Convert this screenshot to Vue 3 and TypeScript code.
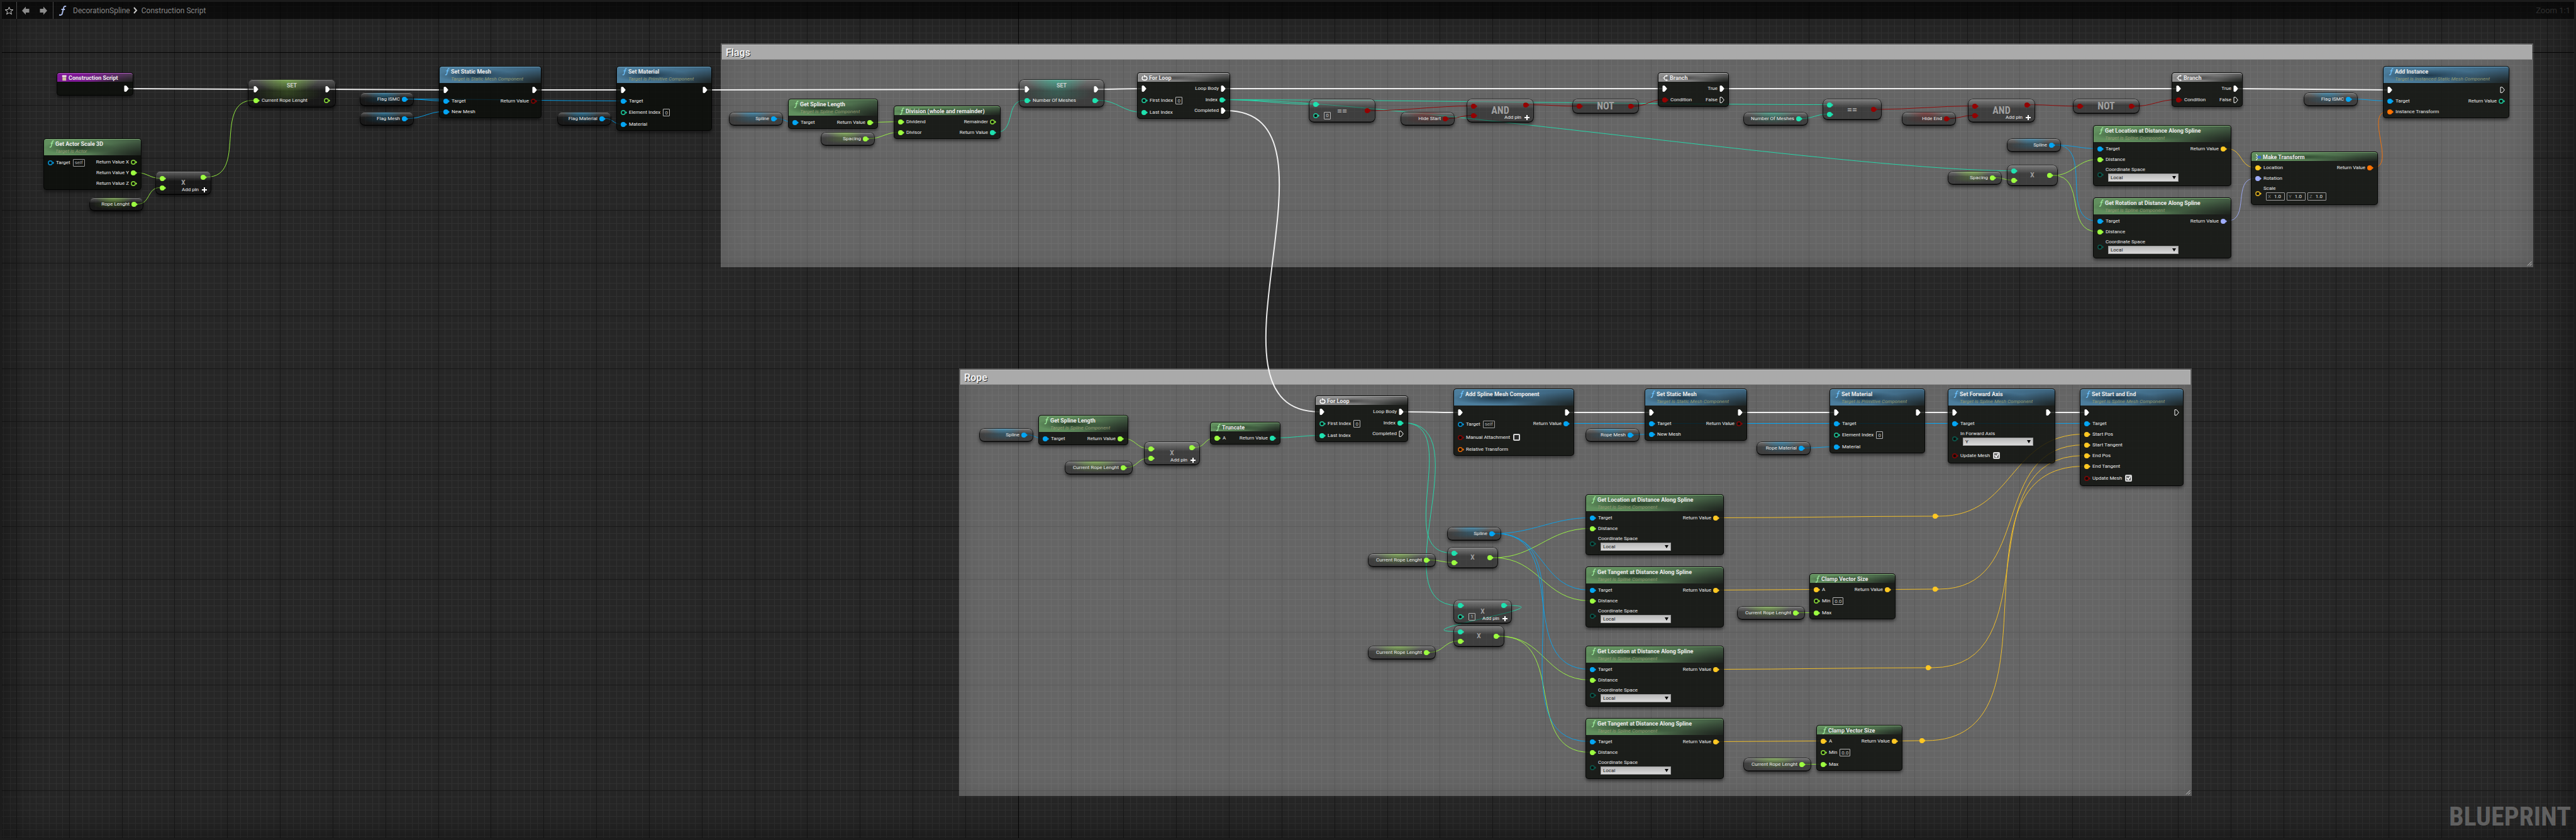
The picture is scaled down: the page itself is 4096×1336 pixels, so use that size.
<script setup lang="ts">
import { computed, nextTick, onBeforeUnmount, onMounted, ref } from 'vue'

type PinType = 'exec' | 'real' | 'obj' | 'int' | 'bool' | 'vec' | 'rot' | 'xform' | 'enum'
type Control = 'self' | 'num' | 'check' | 'select' | 'vec'

interface Pin {
  k: string
  t: PinType
  l?: string
  c?: Control
  v?: string
}

interface GraphNode {
  id: string
  kind: 'fn' | 'set' | 'var' | 'op' | 'knot'
  col: number
  row: number
  w: number
  tone?: 'green' | 'blue' | 'gray' | 'purple'
  icon?: 'f' | 'loop' | 'branch' | 'event' | 'make'
  title?: string
  sub?: string
  addPin?: boolean
  ins: Pin[]
  outs: Pin[]
}

const CELL = 10.4784
const colors: Record<PinType, string> = {
  exec: '#ffffff',
  real: '#9dfd41',
  obj: '#04a6f4',
  int: '#1fe2b0',
  bool: '#930202',
  vec: '#ffc823',
  rot: '#9fadfb',
  xform: '#ff7302',
  enum: '#0a6458',
}

const p = (k: string, t: PinType, l?: string, c?: Control, v?: string): Pin => ({ k, t, l, c, v })
const exec = (l?: string, k = 'exec'): Pin => p(k, 'exec', l)

const variable = (id: string, col: number, row: number, w: number, t: PinType, title: string): GraphNode => ({
  id, kind: 'var', col, row, w, ins: [], outs: [p('v', t, title)],
})

const setter = (id: string, col: number, row: number, w: number, t: PinType, label: string): GraphNode => ({
  id, kind: 'set', col, row, w, title: 'SET', ins: [exec(), p('v', t, label)], outs: [exec(), p('v', t)],
})

const op = (
  id: string, col: number, row: number, w: number, title: string, ins: Pin[], out: PinType, addPin = false,
): GraphNode => ({ id, kind: 'op', col, row, w, title, ins, outs: [p('v', out)], addPin })

const knot = (id: string, col: number, row: number): GraphNode => ({
  id, kind: 'knot', col, row, w: 24, ins: [], outs: [p('v', 'vec')],
})

const splineLength = (id: string, col: number, row: number): GraphNode => ({
  id, kind: 'fn', col, row, w: 143, tone: 'green', icon: 'f', title: 'Get Spline Length', sub: 'Target is Spline Component',
  ins: [p('target', 'obj', 'Target')], outs: [p('ret', 'real', 'Return Value')],
})

const alongSpline = (id: string, col: number, row: number, what: string, out: PinType): GraphNode => ({
  id, kind: 'fn', col, row, w: 220, tone: 'green', icon: 'f',
  title: `Get ${what} at Distance Along Spline`, sub: 'Target is Spline Component',
  ins: [p('target', 'obj', 'Target'), p('dist', 'real', 'Distance'), p('space', 'enum', 'Coordinate Space', 'select', 'Local')],
  outs: [p('ret', out, 'Return Value')],
})

const forLoop = (id: string, col: number, row: number): GraphNode => ({
  id, kind: 'fn', col, row, w: 148, tone: 'gray', icon: 'loop', title: 'For Loop',
  ins: [exec(), p('first', 'int', 'First Index', 'num', '0'), p('last', 'int', 'Last Index')],
  outs: [exec('Loop Body', 'body'), p('index', 'int', 'Index'), exec('Completed', 'done')],
})

const branch = (id: string, col: number, row: number): GraphNode => ({
  id, kind: 'fn', col, row, w: 113, tone: 'gray', icon: 'branch', title: 'Branch',
  ins: [exec(), p('cond', 'bool', 'Condition')], outs: [exec('True', 'true'), exec('False', 'false')],
})

const setStaticMesh = (id: string, col: number, row: number): GraphNode => ({
  id, kind: 'fn', col, row, w: 163, tone: 'blue', icon: 'f', title: 'Set Static Mesh', sub: 'Target is Static Mesh Component',
  ins: [exec(), p('target', 'obj', 'Target'), p('mesh', 'obj', 'New Mesh')],
  outs: [exec(), p('ret', 'bool', 'Return Value')],
})

const setMaterial = (id: string, col: number, row: number): GraphNode => ({
  id, kind: 'fn', col, row, w: 152, tone: 'blue', icon: 'f', title: 'Set Material', sub: 'Target is Primitive Component',
  ins: [exec(), p('target', 'obj', 'Target'), p('elem', 'int', 'Element Index', 'num', '0'), p('mat', 'obj', 'Material')],
  outs: [exec()],
})

const clampSize = (id: string, col: number, row: number): GraphNode => ({
  id, kind: 'fn', col, row, w: 137, tone: 'green', icon: 'f', title: 'Clamp Vector Size',
  ins: [p('a', 'vec', 'A'), p('min', 'real', 'Min', 'num', '0.0'), p('max', 'real', 'Max')],
  outs: [p('ret', 'vec', 'Return Value')],
})

const nodes: GraphNode[] = [
  { id: 'construct', kind: 'fn', col: 8, row: 11, w: 122, tone: 'purple', icon: 'event', title: 'Construction Script', ins: [], outs: [exec()] },
  setter('setRope', 37, 12, 140, 'real', 'Current Rope Lenght'),
  {
    id: 'scale', kind: 'fn', col: 6, row: 21, w: 156, tone: 'green', icon: 'f', title: 'Get Actor Scale 3D', sub: 'Target is Actor',
    ins: [p('target', 'obj', 'Target', 'self')],
    outs: [p('x', 'real', 'Return Value X'), p('y', 'real', 'Return Value Y'), p('z', 'real', 'Return Value Z')],
  },
  op('mulScale', 23, 26, 89, 'X', [p('a', 'real'), p('b', 'real')], 'real', true),
  variable('ropeLen', 13, 30, 86, 'real', 'Rope Lenght'),
  variable('flagIsmc', 54, 14, 86, 'obj', 'Flag ISMC'),
  variable('flagMesh', 54, 17, 86, 'obj', 'Flag Mesh'),
  setStaticMesh('ssm', 66, 10),
  variable('flagMat', 84, 17, 86, 'obj', 'Flag Material'),
  setMaterial('sm', 93, 10),
  variable('spline', 110, 17, 86, 'obj', 'Spline'),
  splineLength('gsl', 119, 15),
  variable('spacing', 124, 20, 86, 'real', 'Spacing'),
  {
    id: 'div', kind: 'fn', col: 135, row: 16, w: 170, tone: 'green', icon: 'f', title: 'Division (whole and remainder)',
    ins: [p('a', 'real', 'Dividend'), p('b', 'real', 'Divisor')],
    outs: [p('rem', 'real', 'Remainder'), p('ret', 'int', 'Return Value')],
  },
  setter('setCount', 154, 12, 136, 'int', 'Number Of Meshes'),
  forLoop('loop', 172, 11),
  op('eqStart', 198, 15, 106, '==', [p('a', 'int'), p('b', 'int', undefined, 'num', '0')], 'bool'),
  variable('hideStart', 212, 17, 86, 'bool', 'Hide Start'),
  op('andStart', 222, 15, 107, 'AND', [p('a', 'bool'), p('b', 'bool')], 'bool', true),
  op('notStart', 238, 15, 106, 'NOT', [p('a', 'bool')], 'bool'),
  branch('branchStart', 251, 11),
  variable('count', 264, 17, 103, 'int', 'Number Of Meshes'),
  op('eqEnd', 276, 15, 94, '==', [p('a', 'int'), p('b', 'int')], 'bool'),
  variable('hideEnd', 288, 17, 86, 'bool', 'Hide End'),
  op('andEnd', 298, 15, 107, 'AND', [p('a', 'bool'), p('b', 'bool')], 'bool', true),
  op('notEnd', 314, 15, 106, 'NOT', [p('a', 'bool')], 'bool'),
  branch('branchEnd', 329, 11),
  variable('splineFlag', 304, 21, 86, 'obj', 'Spline'),
  variable('spacingFlag', 295, 26, 86, 'real', 'Spacing'),
  op('mulFlag', 304, 25, 81, 'X', [p('a', 'int'), p('b', 'real')], 'real'),
  alongSpline('locFlag', 317, 19, 'Location', 'vec'),
  alongSpline('rotFlag', 317, 30, 'Rotation', 'rot'),
  {
    id: 'make', kind: 'fn', col: 341, row: 23, w: 202, tone: 'green', icon: 'make', title: 'Make Transform',
    ins: [p('loc', 'vec', 'Location'), p('rot', 'rot', 'Rotation'), p('scale', 'vec', 'Scale', 'vec', '1.0')],
    outs: [p('ret', 'xform', 'Return Value')],
  },
  variable('flagIsmcAdd', 349, 14, 86, 'obj', 'Flag ISMC'),
  {
    id: 'addInst', kind: 'fn', col: 361, row: 10, w: 201, tone: 'blue', icon: 'f', title: 'Add Instance',
    sub: 'Target is Instanced Static Mesh Component',
    ins: [exec(), p('target', 'obj', 'Target'), p('xform', 'xform', 'Instance Transform')],
    outs: [exec(), p('ret', 'int', 'Return Value')],
  },

  variable('splineRope', 148, 65, 86, 'obj', 'Spline'),
  splineLength('gslRope', 157, 63),
  variable('curA', 161, 70, 108, 'real', 'Current Rope Lenght'),
  op('mulRope', 173, 67, 89, 'X', [p('a', 'real'), p('b', 'real')], 'real', true),
  {
    id: 'trunc', kind: 'fn', col: 183, row: 64, w: 112, tone: 'green', icon: 'f', title: 'Truncate',
    ins: [p('a', 'real', 'A')], outs: [p('ret', 'int', 'Return Value')],
  },
  forLoop('loopRope', 199, 60),
  {
    id: 'addMesh', kind: 'fn', col: 220, row: 59, w: 192, tone: 'blue', icon: 'f', title: 'Add Spline Mesh Component', sub: ' ',
    ins: [
      exec(), p('target', 'obj', 'Target', 'self'), p('manual', 'bool', 'Manual Attachment', 'check'),
      p('rel', 'xform', 'Relative Transform'),
    ],
    outs: [exec(), p('ret', 'obj', 'Return Value')],
  },
  variable('ropeMesh', 240, 65, 86, 'obj', 'Rope Mesh'),
  setStaticMesh('ssmRope', 249, 59),
  variable('ropeMat', 266, 67, 86, 'obj', 'Rope Material'),
  setMaterial('smRope', 277, 59),
  {
    id: 'axis', kind: 'fn', col: 295, row: 59, w: 171, tone: 'blue', icon: 'f', title: 'Set Forward Axis',
    sub: 'Target is Spline Mesh Component',
    ins: [
      exec(), p('target', 'obj', 'Target'), p('axis', 'enum', 'In Forward Axis', 'select', 'Y'),
      p('upd', 'bool', 'Update Mesh', 'check', 'on'),
    ],
    outs: [exec()],
  },
  {
    id: 'startEnd', kind: 'fn', col: 315, row: 59, w: 165, tone: 'blue', icon: 'f', title: 'Set Start and End',
    sub: 'Target is Spline Mesh Component',
    ins: [
      exec(), p('target', 'obj', 'Target'), p('sp', 'vec', 'Start Pos'), p('st', 'vec', 'Start Tangent'),
      p('ep', 'vec', 'End Pos'), p('et', 'vec', 'End Tangent'), p('upd', 'bool', 'Update Mesh', 'check', 'on'),
    ],
    outs: [exec()],
  },
  variable('splineSeg', 219, 80, 86, 'obj', 'Spline'),
  variable('curB', 207, 84, 108, 'real', 'Current Rope Lenght'),
  op('mulB', 219, 83, 81, 'X', [p('a', 'int'), p('b', 'real')], 'real'),
  op('mulNext', 220, 91, 93, 'X', [p('a', 'int'), p('b', 'int', undefined, 'num', '1')], 'int', true),
  op('mulC', 220, 95, 81, 'X', [p('a', 'int'), p('b', 'real')], 'real'),
  variable('curC', 207, 98, 108, 'real', 'Current Rope Lenght'),
  alongSpline('locA', 240, 75, 'Location', 'vec'),
  alongSpline('tanA', 240, 86, 'Tangent', 'vec'),
  alongSpline('locB', 240, 98, 'Location', 'vec'),
  alongSpline('tanB', 240, 109, 'Tangent', 'vec'),
  variable('curD', 263, 92, 108, 'real', 'Current Rope Lenght'),
  clampSize('clampA', 274, 87),
  variable('curE', 264, 115, 108, 'real', 'Current Rope Lenght'),
  clampSize('clampB', 275, 110),
  knot('k1', 292, 78),
  knot('k2', 292, 89),
  knot('k3', 291, 101),
  knot('k4', 290, 112),
]

const links: [string, string][] = [
  ['construct.exec', 'setRope.exec'], ['scale.y', 'mulScale.a'], ['ropeLen.v', 'mulScale.b'], ['mulScale.v', 'setRope.v'],
  ['setRope.exec', 'ssm.exec'], ['flagIsmc.v', 'ssm.target'], ['flagIsmc.v', 'sm.target'], ['flagMesh.v', 'ssm.mesh'],
  ['ssm.exec', 'sm.exec'], ['flagMat.v', 'sm.mat'], ['sm.exec', 'setCount.exec'], ['spline.v', 'gsl.target'],
  ['gsl.ret', 'div.a'], ['spacing.v', 'div.b'], ['div.ret', 'setCount.v'], ['setCount.exec', 'loop.exec'],
  ['setCount.v', 'loop.last'], ['loop.body', 'branchStart.exec'], ['loop.index', 'eqStart.a'], ['loop.index', 'eqEnd.a'],
  ['loop.index', 'mulFlag.a'], ['eqStart.v', 'andStart.a'], ['hideStart.v', 'andStart.b'], ['andStart.v', 'notStart.a'],
  ['notStart.v', 'branchStart.cond'], ['branchStart.true', 'branchEnd.exec'], ['count.v', 'eqEnd.b'], ['eqEnd.v', 'andEnd.a'],
  ['hideEnd.v', 'andEnd.b'], ['andEnd.v', 'notEnd.a'], ['notEnd.v', 'branchEnd.cond'], ['branchEnd.true', 'addInst.exec'],
  ['flagIsmcAdd.v', 'addInst.target'], ['splineFlag.v', 'locFlag.target'], ['splineFlag.v', 'rotFlag.target'],
  ['spacingFlag.v', 'mulFlag.b'], ['mulFlag.v', 'locFlag.dist'], ['mulFlag.v', 'rotFlag.dist'], ['locFlag.ret', 'make.loc'],
  ['rotFlag.ret', 'make.rot'], ['make.ret', 'addInst.xform'], ['loop.done', 'loopRope.exec'],
  ['splineRope.v', 'gslRope.target'], ['gslRope.ret', 'mulRope.a'], ['curA.v', 'mulRope.b'], ['mulRope.v', 'trunc.a'],
  ['trunc.ret', 'loopRope.last'], ['loopRope.body', 'addMesh.exec'], ['loopRope.index', 'mulB.a'],
  ['loopRope.index', 'mulNext.a'], ['addMesh.exec', 'ssmRope.exec'], ['addMesh.ret', 'ssmRope.target'],
  ['addMesh.ret', 'smRope.target'], ['addMesh.ret', 'axis.target'], ['addMesh.ret', 'startEnd.target'],
  ['ropeMesh.v', 'ssmRope.mesh'], ['ssmRope.exec', 'smRope.exec'], ['ropeMat.v', 'smRope.mat'], ['smRope.exec', 'axis.exec'],
  ['axis.exec', 'startEnd.exec'], ['curB.v', 'mulB.b'], ['mulB.v', 'locA.dist'], ['mulB.v', 'tanA.dist'],
  ['mulNext.v', 'mulC.a'], ['curC.v', 'mulC.b'], ['mulC.v', 'locB.dist'], ['mulC.v', 'tanB.dist'],
  ['splineSeg.v', 'locA.target'], ['splineSeg.v', 'tanA.target'], ['splineSeg.v', 'locB.target'],
  ['splineSeg.v', 'tanB.target'], ['locA.ret', 'k1.v'], ['k1.v', 'startEnd.sp'], ['tanA.ret', 'clampA.a'],
  ['curD.v', 'clampA.max'], ['clampA.ret', 'k2.v'], ['k2.v', 'startEnd.st'], ['locB.ret', 'k3.v'], ['k3.v', 'startEnd.ep'],
  ['tanB.ret', 'clampB.a'], ['curE.v', 'clampB.max'], ['clampB.ret', 'k4.v'], ['k4.v', 'startEnd.et'],
]

const comments = [
  { title: 'Flags', x: 1146, y: 69, w: 2882, h: 356 },
  { title: 'Rope', x: 1525, y: 586, w: 1960, h: 680 },
]

const linkedOut = new Set(links.map((l) => l[0]))
const linkedIn = new Set(links.map((l) => l[1]))
const isLinked = (n: GraphNode, pin: Pin, side: 'in' | 'out') =>
  (side === 'in' ? linkedIn : linkedOut).has(`${n.id}.${pin.k}`)

const rowsOf = (n: GraphNode) => [
  { side: 'in' as const, pins: n.ins },
  { side: 'out' as const, pins: n.outs },
]
const typeOfOut = (path: string): PinType => {
  const [id, k] = path.split('.')
  return nodes.find((n) => n.id === id)!.outs.find((o) => o.k === k)!.t
}
const place = (n: GraphNode) => ({
  left: `${Math.round(n.col * CELL + 6)}px`,
  top: `${Math.round(n.row * CELL)}px`,
  width: `${n.w}px`,
  '--tint': colors[(n.outs[n.outs.length - 1] ?? n.ins[0]).t],
})

const graph = ref<HTMLElement | null>(null)
const size = ref({ w: window.innerWidth, h: window.innerHeight })
const wires = ref<{ d: string; color: string; width: number }[]>([])

const grid = computed(() => {
  const { w, h } = size.value
  let minor = ''
  let major = ''
  for (let i = -2; i * CELL < w; i++) {
    const x = Math.round(i * CELL + 26)
    if (i % 8 === 0) major += `M${x} 0v${h}`
    else minor += `M${x} 0v${h}`
  }
  for (let i = -8; i * CELL < h; i++) {
    const y = Math.round(i * CELL + 83)
    if (i % 8 === 0) major += `M0 ${y}h${w}`
    else minor += `M0 ${y}h${w}`
  }
  return { minor, major, axes: `M0 83h${w}M1619 0v${h}` }
})

// Hermite tangents grow with the distance between pins and saturate on long wires.
function curve(x1: number, y1: number, x2: number, y2: number) {
  const dx = Math.abs(x2 - x1)
  const dy = Math.abs(y2 - y1)
  const t = x2 >= x1
    ? (Math.min(dx, 655) + Math.min(dy, 655)) / 3
    : Math.min(dx, 131) + Math.min(dy, 131) / 2
  return `M${x1} ${y1}C${x1 + t} ${y1} ${x2 - t} ${y2} ${x2} ${y2}`
}

function measure() {
  const root = graph.value
  if (!root) return
  size.value = { w: root.clientWidth, h: root.clientHeight }
  const o = root.getBoundingClientRect()
  const find = (side: string, path: string) =>
    (root.querySelector(`[data-pin="${side}:${path}"]`) ?? root.querySelector(`[data-pin="out:${path}"]`))!.getBoundingClientRect()
  wires.value = links.map(([from, to]) => {
    const a = find('out', from)
    const b = find('in', to)
    const t = typeOfOut(from)
    return {
      d: curve(a.right - o.left, a.top + a.height / 2 - o.top, b.left - o.left, b.top + b.height / 2 - o.top),
      color: colors[t],
      width: t === 'exec' ? 2 : 1,
    }
  })
}

onMounted(async () => {
  await nextTick()
  measure()
  document.fonts.ready.then(measure)
  window.addEventListener('resize', measure)
})
onBeforeUnmount(() => window.removeEventListener('resize', measure))
</script>

<template>
  <main ref="graph" class="graph">
    <svg class="layer" :width="size.w" :height="size.h" shape-rendering="crispEdges" aria-hidden="true">
      <path :d="grid.minor" stroke="#313131" />
      <path :d="grid.major" stroke="#181818" />
      <path :d="grid.axes" stroke="#050505" />
    </svg>
    <div class="vignette"></div>

    <section
      v-for="c in comments"
      :key="c.title"
      class="comment"
      :style="{ left: c.x + 'px', top: c.y + 'px', width: c.w + 'px', height: c.h + 'px' }"
    >
      <h2>{{ c.title }}</h2>
      <svg class="grip" viewBox="0 0 8 8" aria-hidden="true"><path d="M1 7.5L7.5 1M4.5 7.5L7.5 4.5" /></svg>
    </section>

    <svg class="layer" :width="size.w" :height="size.h" fill="none" aria-hidden="true">
      <path v-for="(w, i) in wires" :key="i" :d="w.d" :stroke="w.color" :stroke-width="w.width" stroke-opacity="0.9" />
    </svg>

    <article v-for="n in nodes" :key="n.id" class="node" :class="[n.kind, n.tone, { add: n.addPin }]" :style="place(n)">
      <header v-if="n.kind === 'fn'">
        <svg v-if="n.icon === 'f'" class="icon f" viewBox="0 0 8 12" aria-hidden="true">
          <path d="M7.4 1.7C6.6.6 5.4.9 5 2.8L3.5 9.3C3.2 10.9 2.2 11.5.8 10.7M2.6 4.6h3.6" />
        </svg>
        <svg v-else-if="n.icon === 'loop'" class="icon wide" viewBox="0 0 11 11" aria-hidden="true">
          <path d="M3.4 3.1C1.6 3.4 1.2 4.4 1.2 6c0 2.2.7 3.2 4.3 3.2S9.8 8.2 9.8 6c0-1.7-.5-2.9-3-3" stroke-width="1.7" fill="none" />
          <path d="M4.4 0v5l3.200-2.500z" stroke="none" fill="#fff" />
        </svg>
        <svg v-else-if="n.icon === 'branch'" class="icon wide" viewBox="0 0 11 12" aria-hidden="true">
          <path d="M1 6h2.5M7.500 2.200C4.500 2.200 3.600 3.800 3.600 6s.9 3.800 3.900 3.800" stroke-width="1.3" fill="none" />
          <path d="M7 .4l3 1.800-3 1.800zM7 8l3 1.800-3 1.800z" stroke="none" fill="#fff" />
        </svg>
        <svg v-else-if="n.icon === 'event'" class="icon wide" viewBox="0 0 11 11" aria-hidden="true">
          <path d="M2 .8h7.500v3H2z" stroke="none" fill="#f3f0e6" />
          <path d="M2.500 4.300h6.500v5.900H2.500z" stroke="none" fill="#cdc4a0" />
        </svg>
        <svg v-else class="icon wide" viewBox="0 0 11 12" aria-hidden="true">
          <path d="M1.500 1l3 3.500M1.500 11l3-3.500M1 6h3" stroke-width="1.2" fill="none" />
          <path d="M4 3.600h6v4.800H4z" stroke="none" fill="#3b6fd0" />
        </svg>
        <div class="heading">
          <h3>{{ n.title }}</h3>
          <p v-if="n.sub">{{ n.sub }}</p>
        </div>
      </header>
      <h3 v-else-if="n.kind === 'set'" class="set-title">{{ n.title }}</h3>
      <h3 v-else-if="n.kind === 'op'" class="glyph" :class="{ word: n.title!.length > 2, sign: n.title === '==' }">{{ n.title }}</h3>

      <div class="body">
        <div v-for="r in rowsOf(n)" :key="r.side" class="side" :class="r.side">
          <div v-for="pin in r.pins" :key="pin.k" class="row" :class="[pin.t, pin.c && `with-${pin.c}`]">
            <svg v-if="pin.t === 'exec'" class="pin exec" viewBox="0 0 8 10" :data-pin="`${r.side}:${n.id}.${pin.k}`" aria-hidden="true">
              <path
                d="M1 .7h2.800L7.300 5 3.800 9.300H1z"
                stroke="#fff"
                stroke-linejoin="round"
                :fill="isLinked(n, pin, r.side) ? '#fff' : 'none'"
              />
            </svg>
            <svg v-else class="pin" viewBox="0 0 10 8" :data-pin="`${r.side}:${n.id}.${pin.k}`" :fill="colors[pin.t]" aria-hidden="true">
              <circle v-if="isLinked(n, pin, r.side)" cx="4" cy="4" r="4" />
              <circle v-else cx="4" cy="4" r="3.1" :stroke="colors[pin.t]" stroke-width="1.6" fill="#0b0d0a" stroke-opacity="0.8" />
              <path d="M8 1.900L10 4 8 6.100z" />
            </svg>
            <div v-if="pin.c === 'select'" class="stack">
              <label :for="`${n.id}-${pin.k}`">{{ pin.l }}</label>
              <div class="combo">
                <select :id="`${n.id}-${pin.k}`"><option>{{ pin.v }}</option></select>
                <svg viewBox="0 0 6 5" aria-hidden="true"><path d="M0 0h6L3 5z" /></svg>
              </div>
            </div>
            <div v-else-if="pin.c === 'vec'" class="stack">
              <span>{{ pin.l }}</span>
              <div class="vector">
                <label v-for="axis in ['X', 'Y', 'Z']" :key="axis">{{ axis }}<input type="text" :value="pin.v" /></label>
              </div>
            </div>
            <template v-else-if="pin.c === 'num'">
              <label v-if="pin.l" :for="`${n.id}-${pin.k}`">{{ pin.l }}</label>
              <input
                :id="`${n.id}-${pin.k}`"
                class="num"
                :class="{ long: pin.v!.length > 1 }"
                type="text"
                :value="pin.v"
                :aria-label="pin.l ?? 'Value'"
              />
            </template>
            <template v-else-if="pin.c === 'check'">
              <label :for="`${n.id}-${pin.k}`">{{ pin.l }}</label>
              <input :id="`${n.id}-${pin.k}`" type="checkbox" :checked="pin.v === 'on'" />
            </template>
            <template v-else>
              <span v-if="pin.l">{{ pin.l }}</span>
              <span v-if="pin.c === 'self'" class="self">self</span>
            </template>
          </div>
        </div>
      </div>
      <button v-if="n.addPin" class="add-pin" type="button">
        Add pin
        <svg viewBox="0 0 8 8" aria-hidden="true"><path d="M4 0v8M0 4h8" /></svg>
      </button>
    </article>

    <nav class="bar">
      <button type="button" aria-label="Favorite">
        <svg width="15" height="14" viewBox="0 0 15 14"><path d="M7.500 1.200l1.700 4.200 4.500.2-3.500 2.800 1.200 4.300-3.900-2.400-3.900 2.400 1.200-4.300L1.300 5.600l4.500-.2z" fill="none" stroke="#d4d4d4" /></svg>
      </button>
      <i class="rule"></i>
      <button type="button" aria-label="Back">
        <svg width="12" height="14" viewBox="0 0 12 14"><path d="M0 7l6-6.500V4h5.500v6H6v3.500z" fill="#8b8b8b" /></svg>
      </button>
      <button type="button" aria-label="Forward">
        <svg width="12" height="14" viewBox="0 0 12 14"><path d="M12 7L6 .5V4H.5v6H6v3.500z" fill="#8b8b8b" /></svg>
      </button>
      <i class="rule"></i>
      <svg class="fn-mark" width="13" height="16" viewBox="0 0 13 16" aria-hidden="true">
        <path d="M12 1.600C10.600.4 8.800.8 8.200 3.400L6 12.300C5.600 14.600 3.400 15.600 1.200 14.500M4.600 6h5.600" />
      </svg>
      <a href="#">DecorationSpline</a>
      <svg class="chevron" width="7" height="11" viewBox="0 0 7 11" aria-hidden="true"><path d="M1 1l4 4.500L1 10" /></svg>
      <a href="#">Construction Script</a>
      <span class="zoom">Zoom 1:1</span>
    </nav>
    <strong class="watermark">BLUEPRINT</strong>
  </main>
</template>

<style>
body {
  background: #262626;
}
</style>

<style scoped>
.graph {
  position: relative;
  width: 100%;
  min-height: 100vh;
  overflow: hidden;
  background: #262626;
  color: #ececec;
  font: 8px/12px Roboto, 'Liberation Sans', sans-serif;
}
.graph *,
.graph *::before {
  box-sizing: border-box;
}
h2,
h3,
p {
  margin: 0;
  font-size: inherit;
}
.layer {
  position: absolute;
  left: 0;
  top: 0;
}
.vignette {
  position: absolute;
  inset: 0;
  border: 3px solid #1c1c1c;
  box-shadow: inset 0 0 60px rgba(0, 0, 0, 0.5);
}

.comment {
  position: absolute;
  padding: 2px;
  background: rgba(255, 255, 255, 0.295);
  box-shadow: inset 0 0 40px rgba(0, 0, 0, 0.12);
}
.comment h2 {
  height: 24px;
  padding-left: 5px;
  border: 1px solid #b9b9b9;
  border-bottom-color: #8f8f8f;
  background: #aaaaaa;
  color: #f0f0f0;
  font-size: 16px;
  line-height: 24px;
  text-shadow: 1px 1px 0 #2a2a2a;
}
.grip {
  position: absolute;
  right: 2px;
  bottom: 2px;
  width: 8px;
  height: 8px;
  stroke: #c8c8c8;
}

.node {
  position: absolute;
  display: flex;
  flex-direction: column;
  white-space: nowrap;
}
.fn {
  padding-bottom: 2px;
  border-radius: 5px;
  background: rgba(11, 13, 10, 0.82);
  box-shadow: inset 0 0 0 1px rgba(0, 0, 0, 0.75), 0 3px 5px rgba(0, 0, 0, 0.5);
}
header {
  display: flex;
  gap: 2px;
  margin: 1px 1px 0;
  padding: 1px 0 0 8px;
  border-top: 1px solid var(--lip);
  border-radius: 4px 4px 0 0;
  background:
    radial-gradient(ellipse 38% 42% at 36% 52%, var(--deep), transparent),
    radial-gradient(ellipse 60% 90% at 105% 100%, rgba(25, 28, 25, 0.95), transparent),
    linear-gradient(100deg, var(--base) 30%, var(--far) 100%);
}
.green {
  --base: #618f5e;
  --lip: #7fae78;
  --deep: rgba(32, 52, 34, 0.85);
  --far: #3f5640;
}
.blue {
  --base: #4c7d9c;
  --lip: #6ea4c4;
  --deep: rgba(24, 46, 62, 0.85);
  --far: #3a5f78;
}
.gray {
  --base: #8f8f8f;
  --lip: #b5b5b5;
  --deep: rgba(60, 60, 60, 0.85);
  --far: #5c5c5c;
}
.purple {
  --base: #82199a;
  --lip: #b05cc0;
  --deep: rgba(98, 24, 112, 0.6);
  --far: #4a3a4c;
}
.heading h3 {
  font-size: 9px;
  font-weight: 700;
  line-height: 12px;
}
.heading p {
  min-height: 12px;
  color: #929b74;
  font-style: italic;
  line-height: 12px;
}
.icon {
  flex: none;
  width: 8px;
  height: 12px;
  stroke: #fff;
}
.icon.wide {
  width: 10px;
  margin-left: -2px;
}
.icon.f {
  fill: none;
  stroke: #9be79a;
  stroke-width: 1.4;
}
.blue .icon.f {
  stroke: #6cc0fb;
}

.body {
  display: flex;
  justify-content: space-between;
}
.fn .body {
  padding: 2px 7px 0;
}
.side {
  display: flex;
  flex-direction: column;
}
.row {
  display: flex;
  align-items: center;
  gap: 3px;
  height: 17px;
}
.out .row {
  flex-direction: row-reverse;
}
.row.exec {
  height: 18px;
}
.with-num,
.with-self {
  height: 20px;
}
.with-check {
  height: 21px;
}
.with-select,
.with-vec {
  height: 32px;
}
.pin {
  flex: none;
  width: 10px;
  height: 8px;
}
.pin.exec {
  width: 8px;
  height: 10px;
}
.in .row.exec {
  gap: 5px;
}

.self {
  height: 12px;
  margin-left: 1px;
  padding: 0 2px;
  border: 1px solid #9c9c9c;
  border-radius: 1px;
  color: #a8a8a8;
  line-height: 10px;
}
input,
select {
  margin: 0;
  padding: 0;
  border: 0;
  outline: 0;
  background: none;
  color: inherit;
  font: inherit;
}
input.num {
  width: 11px;
  height: 12px;
  margin-left: 1px;
  border: 1px solid #b4b4b4;
  border-radius: 1px;
  color: #c4c4c4;
  line-height: 10px;
  text-align: center;
}
input.num.long {
  width: 17px;
}
input[type='checkbox'] {
  appearance: none;
  width: 11px;
  height: 11px;
  margin-left: 2px;
  border: 2px solid #d6d6d6;
  border-radius: 2px;
  background: #2a2a2a;
}
input[type='checkbox']:checked {
  background: #6d6d6d;
}
input[type='checkbox']:checked::before {
  content: '';
  display: block;
  width: 7px;
  height: 7px;
  background: #ffffff;
  clip-path: polygon(0 50%, 20% 35%, 42% 62%, 82% 0, 100% 14%, 45% 100%);
}
.stack {
  display: flex;
  flex-direction: column;
  height: 32px;
  padding-top: 2px;
}
.combo {
  position: relative;
  width: 112px;
  height: 13px;
  margin-left: 4px;
}
.combo select {
  display: block;
  appearance: none;
  width: 100%;
  height: 100%;
  padding-left: 3px;
  border: 1px solid #9a9a9a;
  background: linear-gradient(#b9b9b9, #dadada);
  color: #111111;
  line-height: 11px;
}
.combo svg {
  position: absolute;
  right: 4px;
  top: 4px;
  width: 6px;
  height: 5px;
  pointer-events: none;
}
.vector {
  display: flex;
  gap: 3px;
  margin-left: 4px;
}
.vector label {
  display: flex;
  gap: 5px;
  width: 30px;
  height: 13px;
  padding-left: 2px;
  border: 1px solid #9c9c9c;
  border-radius: 1px;
  color: #777777;
  line-height: 12px;
}
.vector input {
  width: 14px;
  height: 11px;
  color: #e4e4e4;
}

.var,
.set,
.op {
  border-radius: 8px;
  background:
    linear-gradient(rgba(255, 255, 255, 0.34), rgba(255, 255, 255, 0.1) 30%, transparent 42%),
    rgba(4, 4, 4, 0.4);
  box-shadow:
    inset 0 0 0 1px rgba(0, 0, 0, 0.75),
    inset 0 2px 0 rgba(255, 255, 255, 0.22),
    inset 0 -2px 0 rgba(0, 0, 0, 0.5),
    0 3px 5px rgba(0, 0, 0, 0.5);
}
.var,
.set {
  background:
    radial-gradient(ellipse 36% 46% at 45% 0, color-mix(in srgb, var(--tint) 48%, transparent), transparent),
    radial-gradient(ellipse 40% 36% at 45% 50%, color-mix(in srgb, var(--tint) 18%, transparent), transparent),
    linear-gradient(rgba(255, 255, 255, 0.3), rgba(255, 255, 255, 0.1) 30%, transparent 42%),
    rgba(4, 4, 4, 0.4);
}
.var {
  height: 22px;
  padding: 2px 9px 0;
}
.var .body {
  justify-content: flex-end;
}
.set {
  height: 45px;
  padding: 7px 9px 0;
}
.set-title {
  position: absolute;
  inset: 4px 0 auto;
  color: #dadada;
  font-size: 9px;
  font-weight: 500;
  text-align: center;
}
.op {
  min-height: 24px;
  padding: 2px 7px;
  justify-content: center;
}
.op .side {
  justify-content: center;
}
.op .row:not(.with-num) {
  height: 15px;
}
.op .with-num {
  gap: 6px;
}
.op.add,
.op:has(input) {
  height: 38px;
}
.op.add .body {
  flex: 1;
}
.op.add .out {
  justify-content: flex-start;
}
.glyph {
  position: absolute;
  inset: 0;
  display: flex;
  align-items: center;
  justify-content: center;
  color: #a0a0a0;
  font-size: 10px;
  font-weight: 700;
}
.glyph.sign {
  font-size: 14px;
}
.glyph.word {
  font-family: 'Roboto Condensed', 'Liberation Sans Narrow', Roboto, sans-serif;
  font-size: 16px;
}
.add-pin {
  position: absolute;
  right: 7px;
  bottom: 2px;
  display: flex;
  align-items: center;
  gap: 5px;
  padding: 0;
  border: 0;
  background: none;
  color: inherit;
  font: inherit;
}
.add-pin svg {
  width: 8px;
  height: 8px;
  stroke: #fff;
  stroke-width: 2;
}
.knot {
  height: 8px;
}
.knot .body {
  justify-content: center;
}
.knot .row {
  height: 8px;
}

.bar {
  position: relative;
  display: flex;
  align-items: center;
  height: 27px;
  margin: 3px 3px 0;
  padding: 0 6px 0 4px;
  background: rgba(0, 0, 0, 0.6);
  font-size: 12px;
}
.bar button {
  display: flex;
  padding: 0;
  border: 0;
  background: none;
}
.bar button + button {
  margin-left: 16px;
}
.rule {
  width: 1px;
  height: 27px;
  margin: 0 8px 0 4px;
  background: #4a4a4a;
}
button + button + .rule {
  margin-left: 9px;
}
.fn-mark {
  fill: none;
  stroke: #a9b9e6;
  stroke-width: 2;
}
.bar a {
  margin-left: 10px;
  color: #858585;
  text-decoration: none;
}
.chevron {
  margin: 0 -4px 0 5px;
  fill: none;
  stroke: #c8c8c8;
  stroke-width: 2;
}
.zoom {
  margin-left: auto;
  color: #2e2e2e;
  font-size: 13px;
}
.watermark {
  position: absolute;
  right: 8px;
  bottom: 16px;
  color: #606060;
  font-family: 'Roboto Condensed', 'Liberation Sans Narrow', Roboto, sans-serif;
  font-size: 42px;
  line-height: 42px;
}
</style>
